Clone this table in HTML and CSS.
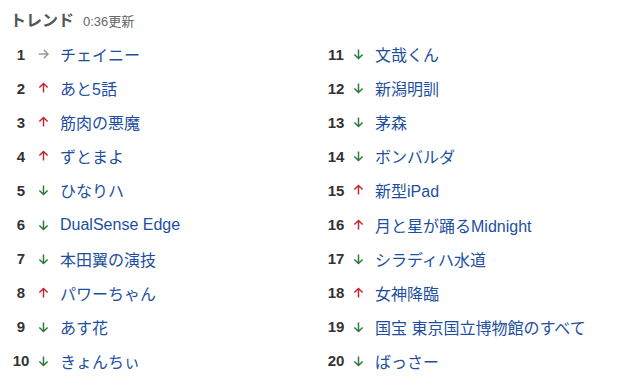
FILE: index.html
```html
<!DOCTYPE html>
<html lang="ja">
<head>
<meta charset="utf-8">
<link rel="stylesheet" href="styles.css">
</head>
<body>
<div class="trend">
  <div class="head"><span class="title">トレンド</span><span class="time">0:36更新</span></div>
  <div class="cols">
    <ol class="col">
      <li class="row"><span class="num">1</span><span class="arr flat"><svg viewBox="0 0 12 12"><path d="M1 6H11M6.5 1.5L11 6L6.5 10.5"/></svg></span><a class="word">チェイニー</a></li>
      <li class="row"><span class="num">2</span><span class="arr up"><svg viewBox="0 0 12 12"><path d="M6 11V1M1.5 5.5L6 1L10.5 5.5"/></svg></span><a class="word">あと5話</a></li>
      <li class="row"><span class="num">3</span><span class="arr up"><svg viewBox="0 0 12 12"><path d="M6 11V1M1.5 5.5L6 1L10.5 5.5"/></svg></span><a class="word">筋肉の悪魔</a></li>
      <li class="row"><span class="num">4</span><span class="arr up"><svg viewBox="0 0 12 12"><path d="M6 11V1M1.5 5.5L6 1L10.5 5.5"/></svg></span><a class="word">ずとまよ</a></li>
      <li class="row"><span class="num">5</span><span class="arr down"><svg viewBox="0 0 12 12"><path d="M6 1V11M1.5 6.5L6 11L10.5 6.5"/></svg></span><a class="word">ひなりハ</a></li>
      <li class="row"><span class="num">6</span><span class="arr down"><svg viewBox="0 0 12 12"><path d="M6 1V11M1.5 6.5L6 11L10.5 6.5"/></svg></span><a class="word">DualSense Edge</a></li>
      <li class="row"><span class="num">7</span><span class="arr down"><svg viewBox="0 0 12 12"><path d="M6 1V11M1.5 6.5L6 11L10.5 6.5"/></svg></span><a class="word">本田翼の演技</a></li>
      <li class="row"><span class="num">8</span><span class="arr up"><svg viewBox="0 0 12 12"><path d="M6 11V1M1.5 5.5L6 1L10.5 5.5"/></svg></span><a class="word">パワーちゃん</a></li>
      <li class="row"><span class="num">9</span><span class="arr down"><svg viewBox="0 0 12 12"><path d="M6 1V11M1.5 6.5L6 11L10.5 6.5"/></svg></span><a class="word">あす花</a></li>
      <li class="row"><span class="num">10</span><span class="arr down"><svg viewBox="0 0 12 12"><path d="M6 1V11M1.5 6.5L6 11L10.5 6.5"/></svg></span><a class="word">きょんちぃ</a></li>
    </ol>
    <ol class="col">
      <li class="row"><span class="num">11</span><span class="arr down"><svg viewBox="0 0 12 12"><path d="M6 1V11M1.5 6.5L6 11L10.5 6.5"/></svg></span><a class="word">文哉くん</a></li>
      <li class="row"><span class="num">12</span><span class="arr down"><svg viewBox="0 0 12 12"><path d="M6 1V11M1.5 6.5L6 11L10.5 6.5"/></svg></span><a class="word">新潟明訓</a></li>
      <li class="row"><span class="num">13</span><span class="arr down"><svg viewBox="0 0 12 12"><path d="M6 1V11M1.5 6.5L6 11L10.5 6.5"/></svg></span><a class="word">茅森</a></li>
      <li class="row"><span class="num">14</span><span class="arr down"><svg viewBox="0 0 12 12"><path d="M6 1V11M1.5 6.5L6 11L10.5 6.5"/></svg></span><a class="word">ボンバルダ</a></li>
      <li class="row"><span class="num">15</span><span class="arr up"><svg viewBox="0 0 12 12"><path d="M6 11V1M1.5 5.5L6 1L10.5 5.5"/></svg></span><a class="word">新型iPad</a></li>
      <li class="row"><span class="num">16</span><span class="arr up"><svg viewBox="0 0 12 12"><path d="M6 11V1M1.5 5.5L6 1L10.5 5.5"/></svg></span><a class="word">月と星が踊るMidnight</a></li>
      <li class="row"><span class="num">17</span><span class="arr down"><svg viewBox="0 0 12 12"><path d="M6 1V11M1.5 6.5L6 11L10.5 6.5"/></svg></span><a class="word">シラディハ水道</a></li>
      <li class="row"><span class="num">18</span><span class="arr up"><svg viewBox="0 0 12 12"><path d="M6 11V1M1.5 5.5L6 1L10.5 5.5"/></svg></span><a class="word">女神降臨</a></li>
      <li class="row"><span class="num">19</span><span class="arr down"><svg viewBox="0 0 12 12"><path d="M6 1V11M1.5 6.5L6 11L10.5 6.5"/></svg></span><a class="word">国宝 東京国立博物館のすべて</a></li>
      <li class="row"><span class="num">20</span><span class="arr down"><svg viewBox="0 0 12 12"><path d="M6 1V11M1.5 6.5L6 11L10.5 6.5"/></svg></span><a class="word">ばっさー</a></li>
    </ol>
  </div>
</div>
</body>
</html>
```

FILE: styles.css
```css
html, body {
  margin: 0;
  padding: 0;
  background: #fff;
}
body {
  font-family: "Liberation Sans", Arial, "Noto Sans CJK JP", sans-serif;
  color: #333;
}
.trend {
  padding: 7px 0 0 10px;
}
.head {
  display: flex;
  align-items: baseline;
  gap: 9px;
  height: 22px;
}
.title {
  font-size: 16px;
  font-weight: bold;
  color: #555;
}
.time {
  font-size: 13px;
  color: #666;
}
.cols {
  display: grid;
  grid-template-columns: 315px 1fr;
  margin-left: -2px;
  margin-top: 8px;
}
.col {
  list-style: none;
  margin: 0;
  padding: 0;
}
.row {
  display: flex;
  align-items: center;
  height: 34.1px;
}
.num {
  width: 26px;
  text-align: center;
  font-size: 15px;
  font-weight: bold;
  color: #333;
}
.arr {
  width: 18px;
  display: flex;
  justify-content: center;
  margin-right: 8px;
}
.arr svg {
  width: 11px;
  height: 12px;
  fill: none;
  stroke-width: 1.6;
}
.up svg { stroke: #c4262e; }
.down svg { stroke: #2b7a3a; }
.flat svg { stroke: #999; }
.word {
  font-size: 16px;
  color: #1e4f9e;
  text-decoration: none;
}
```
